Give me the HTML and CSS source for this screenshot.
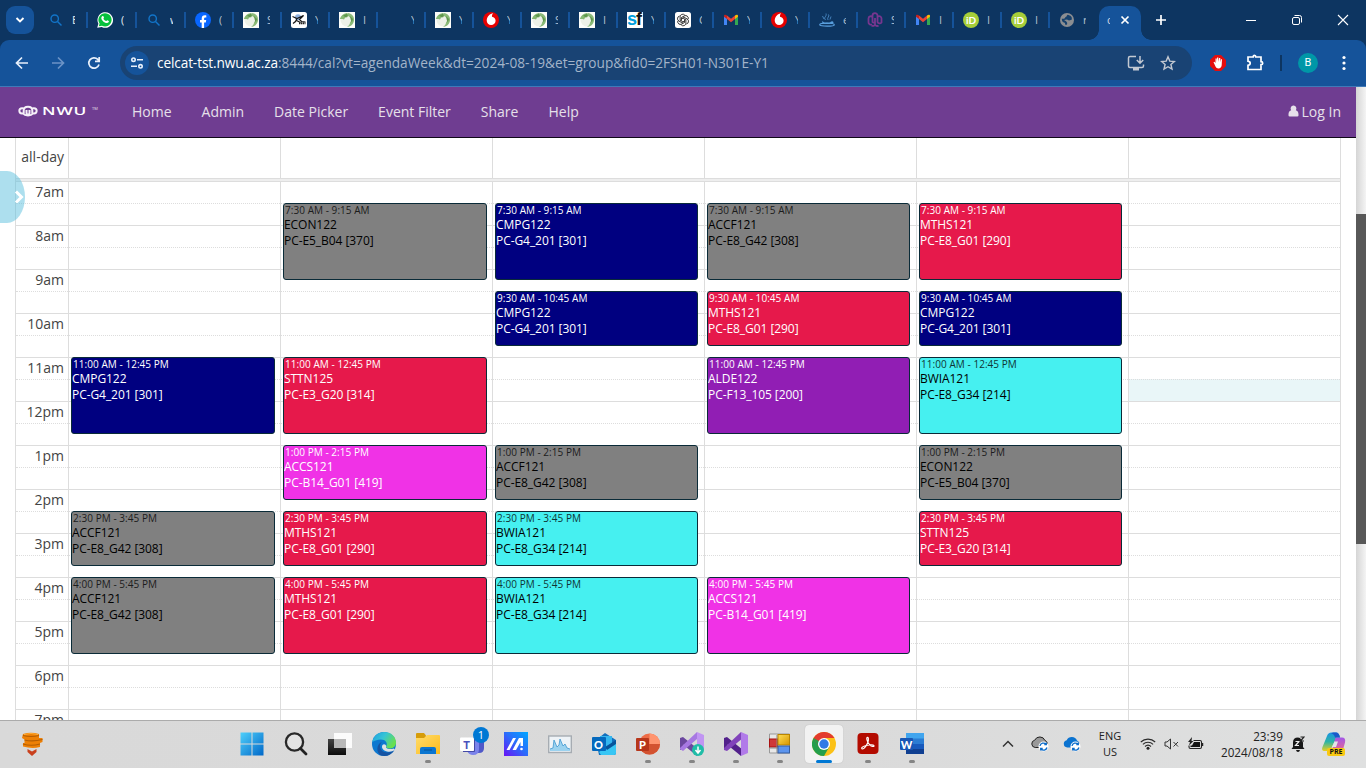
FILE: index.html
```html
<!DOCTYPE html>
<html lang="en">
<head>
<meta charset="utf-8">
<title>Timetable</title>
<link rel="stylesheet" href="styles.css">
</head>
<body>
<svg class="defs" width="0" height="0">
  <defs>
    <linearGradient id="gWin" x1="0" y1="0" x2="1" y2="1"><stop offset="0" stop-color="#4fd0fb"/><stop offset="1" stop-color="#0067c8"/></linearGradient>
    <linearGradient id="gEdge" x1="0" y1="0" x2="1" y2=".5"><stop offset="0" stop-color="#1d9de0"/><stop offset=".5" stop-color="#35c4d6"/><stop offset="1" stop-color="#69e04e"/></linearGradient>
    <linearGradient id="gM" x1="0" y1="1" x2="1" y2="0"><stop offset="0" stop-color="#6a12f5"/><stop offset=".5" stop-color="#2c6bfb"/><stop offset="1" stop-color="#00a8ff"/></linearGradient>
    <linearGradient id="gFold" x1="0" y1="0" x2="1" y2="1"><stop offset="0" stop-color="#ffdc6b"/><stop offset="1" stop-color="#fdbb1c"/></linearGradient>
    <linearGradient id="gDark" x1="0" y1="0" x2="0" y2="1"><stop offset="0" stop-color="#444"/><stop offset="1" stop-color="#0c0c0c"/></linearGradient>
    <linearGradient id="gGold" x1="0" y1="0" x2="1" y2="1"><stop offset="0" stop-color="#ffdf55"/><stop offset="1" stop-color="#d69400"/></linearGradient>
    <linearGradient id="gCo1" x1="0" y1="0" x2="0" y2="1"><stop offset="0" stop-color="#1992e4"/><stop offset=".5" stop-color="#2cb4a6"/><stop offset="1" stop-color="#e9cf20"/></linearGradient>
    <linearGradient id="gCo2" x1="0" y1="0" x2="0" y2="1"><stop offset="0" stop-color="#a257e8"/><stop offset="1" stop-color="#f46b7e"/></linearGradient>
    <symbol id="search" viewBox="0 0 16 16"><circle cx="6.700" cy="6.700" r="3.700" fill="none" stroke="#1275c9" stroke-width="1.400"/><path d="M9.500 9.500l4 4" stroke="#1275c9" stroke-width="1.500"/></symbol>
    <symbol id="whatsapp" viewBox="0 0 16 16"><path d="M.2 15.800l1.200-4A7.800 7.800 0 1 1 4.700 15z" fill="#fff"/><path d="M1.800 14.200l.8-2.600a6.600 6.600 0 1 1 2.400 2.100z" fill="#06c13c"/><path d="M5.200 4.200c1-.7 1.300 0 1.800 1.400.1.500-.7.900-.5 1.300.6 1.100 1.400 1.800 2.500 2.200.5.100.8-1 1.300-.8 1.700.8 1.900.8 1.400 1.800-.7 1.300-2.300 1.200-3.900.4C5.900 9.500 4.500 7.800 4.300 6.200c0-.9.300-1.500.9-2z" fill="#fff"/></symbol>
    <symbol id="facebook" viewBox="0 0 16 16"><circle cx="8" cy="8" r="8" fill="#0866ff"/><path d="M6.700 16v-5.500H5V8h1.700V6.700c0-2.400 1-3.500 3.300-3.500.5 0 1 .1 1.300.2v2.200c-1.500-.1-2.200 0-2.200 1.300V8h2.100l-.4 2.500H9.100V16z" fill="#fff"/></symbol>
    <symbol id="globe" viewBox="0 0 16 16"><path fill="#fcfdfa" d="M0 0h16v16H0z"/><circle cx="8" cy="8" r="6.500" fill="#edf1e8"/><path d="M.8 7C2 3.500 4 1.500 8 1l1.500 2.500L8 5.500l-1.500-.5L5 7.500 3.500 7z" fill="#86b873"/><path d="M8.500 1c4.500.4 7 3.500 6.500 7.500-.5 3.500-3 6-7 6.500 2-1.500 3-3 3-4.500L13 7.500 10.500 5 8.500 3.500z" fill="#8aba78"/><path d="M4 3.500l4-1.800.8 2.100-2 1.700zM11 4l3 3-1.200 3.500-1-2.500z" fill="#5f964c"/></symbol>
    <symbol id="xing" viewBox="0 0 16 16"><rect width="16" height="16" rx="2.500" fill="#fff"/><circle cx="7" cy="5.200" r="3" fill="#8fb1de"/><path d="M1.500 4.500l4.500 2L12.500 3.500 8.500 7.500l2 2 4 .5M6 6.500L4.500 9.500 2 11.500M5.500 8.500l4 2" fill="none" stroke="#161616" stroke-width="1.200"/><path d="M8 11.200h6.500" stroke="#222" stroke-width="2" stroke-dasharray="1.400 .5"/></symbol>
    <symbol id="vodafone" viewBox="0 0 16 16"><circle cx="8" cy="8" r="8" fill="#e60000"/><path d="M10.200 1.300C7.200 1.500 3.700 4.500 3.700 8.500c0 2.600 1.900 4.500 4.400 4.500s4.500-1.900 4.500-4.300c0-2.300-1.700-3.500-3.600-4-.2-1.400.3-2.500 1.200-3.400z" fill="#fff"/></symbol>
    <symbol id="gpt" viewBox="0 0 16 16"><rect width="16" height="16" rx="2.500" fill="#fff"/><g fill="none" stroke="#111" stroke-width=".8"><path id="petal" d="M7.800 9.800L5.100 8.200V4.800a2.700 2.700 0 0 1 4.700-1.700"/><use href="#petal" transform="rotate(60 8 8)"/><use href="#petal" transform="rotate(120 8 8)"/><use href="#petal" transform="rotate(180 8 8)"/><use href="#petal" transform="rotate(240 8 8)"/><use href="#petal" transform="rotate(300 8 8)"/></g></symbol>
    <symbol id="gmail" viewBox="0 0 16 16"><path d="M1 4v9h3V6z" fill="#4285f4"/><path d="M12 6v7h3V4z" fill="#34a853"/><path d="M12 3.600V7l3-2.200V4c0-1.600-1.700-1.800-3-.4z" fill="#fbbc04"/><path d="M4 3.600L8 6.800l4-3.200V7l-4 3.200L4 7z" fill="#ea4335"/><path d="M1 4.800L4 7V3.600C2.700 2.200 1 2.400 1 4z" fill="#c5221f"/></symbol>
    <symbol id="java" viewBox="0 0 16 16"><g fill="none" stroke="#5aa0df"><path d="M6.500 8C4 5 8 5 7 1.500M9 8C7.500 5.500 11 4.500 9.500 2.500M5 7L3.500 4M11 7.500l1-3" stroke-width=".7"/><path d="M3.500 9.500c0 2.500 9 2.500 9 0M12.500 10c2-.5 2 1-.5 1.500" stroke-width="1.200"/><ellipse cx="8" cy="12.700" rx="7.300" ry="1.500" stroke-width="1.200"/></g></symbol>
    <symbol id="nwu" viewBox="0 0 16 16"><path d="M1.500 10.500V6.500a2.300 2.300 0 0 1 4 -1.500V10a1.500 1.500 0 0 0 2.500 0M1.500 10a2.300 2.300 0 0 0 3.500 2.200M5.500 6V3.700a2.500 2.500 0 0 1 5 0V10a2.300 2.300 0 0 0 4 .5V6.500a2.300 2.300 0 0 0-3.500-2M8 6v6.500a2.200 2.200 0 0 0 3.500 1M8 12.500a2.200 2.200 0 0 1-3.300 1" fill="none" stroke="#77368f" stroke-width="1.800"/></symbol>
    <symbol id="earth" viewBox="0 0 16 16"><circle cx="8" cy="8" r="7" fill="#8a8d91"/><path d="M8.500 2.800c-1 1.300-.7 2-2 2.200-.5 1.500-1.500 2-3.700 1.800 0 2.500.8 3.500 2.800 4 .7.200.2 1.700 1.200 2.300C9 12.500 8.300 10.600 7 9.300L5 8l3-.6 2 1.200 2.700-.8C13.500 5 11.600 3.400 8.500 2.800z" fill="#15406c"/></symbol>
    <symbol id="cloud" viewBox="0 0 18 16"><path d="M4.200 11.500A3.700 3.700 0 0 1 3.700 4.200 5.600 5.600 0 0 1 14 4.500a3.500 3.500 0 0 1 1.500 5.500l-3 1.500z"/><circle cx="12.500" cy="10.500" r="5" fill="#fff" stroke="none"/><path d="M9 10a3.500 3.500 0 0 1 6-1.800M15.300 6.500v2h-2M16 11.500a3.500 3.500 0 0 1-6 1.500M9.700 14.500v-2h2" fill="none" stroke="#0a6bc9" stroke-width="1.300"/></symbol>
  </defs>
</svg>

<header class="tabstrip">
  <button class="tab-menu"><svg width="10" height="8" viewBox="0 0 10 8"><path d="M1.500 2L5 5.500 8.500 2" fill="none" stroke="#fff" stroke-width="1.900"/></svg></button>
  <div class="tabs">
    <div class="tab wide"><svg><use href="#search"/></svg><span>E</span></div>
    <div class="tab wide"><svg><use href="#whatsapp"/></svg><span>(</span></div>
    <div class="tab wide"><svg><use href="#search"/></svg><span>w</span></div>
    <div class="tab"><svg><use href="#facebook"/></svg><span>(</span></div>
    <div class="tab"><svg><use href="#globe"/></svg><span>S</span></div>
    <div class="tab"><svg><use href="#xing"/></svg><span>Y</span></div>
    <div class="tab"><svg><use href="#globe"/></svg><span>I</span></div>
    <div class="tab"><svg></svg><span>Y</span></div>
    <div class="tab"><svg><use href="#globe"/></svg><span>Y</span></div>
    <div class="tab"><svg><use href="#vodafone"/></svg><span>Y</span></div>
    <div class="tab"><svg><use href="#globe"/></svg><span>S</span></div>
    <div class="tab"><svg><use href="#globe"/></svg><span>I</span></div>
    <div class="tab"><div class="sf"><b>s</b><i>f</i></div><span>Y</span></div>
    <div class="tab"><svg><use href="#gpt"/></svg><span>C</span></div>
    <div class="tab"><svg><use href="#gmail"/></svg><span>Y</span></div>
    <div class="tab"><svg><use href="#vodafone"/></svg><span>Y</span></div>
    <div class="tab"><svg><use href="#java"/></svg><span>e</span></div>
    <div class="tab"><svg><use href="#nwu"/></svg><span>S</span></div>
    <div class="tab"><svg><use href="#gmail"/></svg><span>I</span></div>
    <div class="tab"><div class="orcid">iD</div><span>I</span></div>
    <div class="tab"><div class="orcid">iD</div><span>I</span></div>
    <div class="tab last"><svg><use href="#earth"/></svg><span>r</span></div>
    <div class="tab-active"><span>c</span><svg class="tab-x" viewBox="0 0 10 10"><path d="M1.500 1.500l7 7m0-7l-7 7" stroke="#fff" stroke-width="1.700"/></svg></div>
  </div>
  <svg class="tab-new" width="12" height="12" viewBox="0 0 12 12"><path d="M6 1v10M1 6h10" stroke="#fff" stroke-width="1.700"/></svg>
  <div class="window-controls">
    <svg width="12" height="12" viewBox="0 0 12 12"><path d="M1 6.500h10" stroke="#fff"/></svg>
    <svg width="12" height="12" viewBox="0 0 12 12"><g fill="none" stroke="#fff"><rect x="1.500" y="3.500" width="7" height="7" rx="1.500"/><path d="M3.500 1.500h5a2 2 0 0 1 2 2v5"/></g></svg>
    <svg width="12" height="12" viewBox="0 0 12 12"><path d="M1 1l10 10M11 1L1 11" stroke="#fff" stroke-width="1.100"/></svg>
  </div>
</header>

<div class="toolbar-back">
<div class="toolbar">
  <div class="nav-buttons">
    <svg width="16" height="16" viewBox="0 0 16 16"><path d="M14 8H3M8 2.500L2.500 8 8 13.500" fill="none" stroke="#e8f0fb" stroke-width="1.700"/></svg>
    <svg width="16" height="16" viewBox="0 0 16 16"><path d="M2 8h11M8 2.500L13.500 8 8 13.500" fill="none" stroke="#6c93c6" stroke-width="1.700"/></svg>
    <svg width="16" height="16" viewBox="0 0 16 16"><path d="M13 9.500A5.200 5.200 0 1 1 11.800 4.400L13 5.700M13.200 2v4.300H9" fill="none" stroke="#e8f0fb" stroke-width="1.700"/></svg>
  </div>
  <div class="omnibox">
    <div class="site-info"><svg width="14" height="14" viewBox="0 0 14 14"><g fill="none" stroke="#e8f0fb" stroke-width="1.600"><circle cx="3.500" cy="3.700" r="1.700"/><path d="M7 3.700h6M1 10.300h6"/><circle cx="10.500" cy="10.300" r="1.700"/></g></svg></div>
    <div class="url"><b>celcat-tst.nwu.ac.za</b>:8444/cal?vt=agendaWeek&amp;dt=2024-08-19&amp;et=group&amp;fid0=2FSH01-N301E-Y1</div>
    <svg width="18" height="16" viewBox="0 0 18 16"><path d="M9 1.500H3Q1.500 1.500 1.500 3v8q0 1.500 1.500 1.500h12q1.500 0 1.500-1.500V9.500M13 1v7M9.800 5L13 8.200 16.200 5" fill="none" stroke="#c3c9d2" stroke-width="1.500"/><path d="M6 13h6v2.500H6z" fill="#c3c9d2"/></svg>
    <svg class="star" width="16" height="16" viewBox="0 0 16 16"><path d="M8 1.800l1.800 4.300 4.600.4-3.500 3 1.100 4.600L8 11.700 4 14.100l1.100-4.600-3.500-3 4.600-.4z" fill="none" stroke="#c3c9d2" stroke-width="1.400"/></svg>
  </div>
  <svg class="adblock" width="16" height="16" viewBox="0 0 16 16"><path d="M5 0h6l5 5v6l-5 5H5l-5-5V5z" fill="#e40d0d"/><path d="M4.600 9.500L3.500 7.300l.9-.5L5.500 8V3.500h1.200V7l.4-4.500h1.200L8.500 7l.6-4h1.200l-.1 4.300.7-3H12l-.3 6c-.2 2-1.300 3.200-3.200 3.200-1.700 0-2.700-.8-3.900-4z" fill="#fff"/></svg>
  <svg class="puzzle" width="18" height="17" viewBox="0 0 18 17"><path d="M2 3h5.200q0-1.700 1.300-1.700T9.800 3H15v4.700q1.700 0 1.700 1.500T15 10.700V15.500H2v-4.200q2.200-.3 2.200-2T2 7.200z" fill="none" stroke="#fff" stroke-width="1.700"/></svg>
  <div class="divider"></div>
  <div class="avatar">B</div>
  <svg class="dots" width="4" height="16" viewBox="0 0 4 16" fill="#fff"><circle cx="2" cy="2.500" r="1.600"/><circle cx="2" cy="8" r="1.600"/><circle cx="2" cy="13.500" r="1.600"/></svg>
</div>
</div>

<div class="viewport">
<main class="page">
  <nav class="navbar">
    <div class="brand">
      <svg width="20" height="12" viewBox="0 0 20 12"><path d="M5.500 3.200H4a2.600 2.600 0 0 0 0 5.300h1.700V5.500Q5.700 1.800 10 1.800t4.300 3.700v3H16a2.600 2.600 0 0 0 0-5.300h-1.500M8.500 5v3q0 1.500 1.500 1.500t1.500-1.500V5M5 8.500Q6.500 10.500 10 10.500t5-2" fill="none" stroke="#f5f0f8" stroke-width="2"/></svg>
      <span class="brand-name">NWU</span><span class="tm">TM</span>
    </div>
    <a>Home</a><a>Admin</a><a>Date Picker</a><a>Event Filter</a><a>Share</a><a>Help</a>
    <a class="login"><svg width="11" height="12" viewBox="0 0 12 12"><path d="M6 0a3 3.300 0 0 1 2.600 5.200C11 6 11.500 8 11.500 10.500q0 1.500-1.500 1.500H2Q.5 12 .5 10.500C.5 8 1 6 3.400 5.200A3 3.300 0 0 1 6 0z" fill="#e6e0ea"/></svg>Log In</a>
  </nav>
  <section class="calendar">
    <div class="allday"><span>all-day</span><i></i><i></i><i></i><i></i><i></i><i></i></div>
    <div class="split"></div>
    <div class="timegrid">
      <div class="slots">
        <div>7am</div><div></div><div>8am</div><div></div><div>9am</div><div></div><div>10am</div><div></div><div>11am</div><div></div><div>12pm</div><div></div><div>1pm</div><div></div><div>2pm</div><div></div><div>3pm</div><div></div><div>4pm</div><div></div><div>5pm</div><div></div><div>6pm</div><div></div><div>7pm</div>
      </div>
      <div class="days">
        <div class="day">
          <article class="event navy r17 long"><small>11:00 AM - 12:45 PM</small>CMPG122<br>PC-G4_201 [301]</article>
          <article class="event gray r31"><small>2:30 PM - 3:45 PM</small>ACCF121<br>PC-E8_G42 [308]</article>
          <article class="event gray r37 long"><small>4:00 PM - 5:45 PM</small>ACCF121<br>PC-E8_G42 [308]</article>
        </div>
        <div class="day">
          <article class="event gray r3 long"><small>7:30 AM - 9:15 AM</small>ECON122<br>PC-E5_B04 [370]</article>
          <article class="event red r17 long"><small>11:00 AM - 12:45 PM</small>STTN125<br>PC-E3_G20 [314]</article>
          <article class="event pink r25"><small>1:00 PM - 2:15 PM</small>ACCS121<br>PC-B14_G01 [419]</article>
          <article class="event red r31"><small>2:30 PM - 3:45 PM</small>MTHS121<br>PC-E8_G01 [290]</article>
          <article class="event red r37 long"><small>4:00 PM - 5:45 PM</small>MTHS121<br>PC-E8_G01 [290]</article>
        </div>
        <div class="day narrow">
          <article class="event navy r3 long"><small>7:30 AM - 9:15 AM</small>CMPG122<br>PC-G4_201 [301]</article>
          <article class="event navy r11"><small>9:30 AM - 10:45 AM</small>CMPG122<br>PC-G4_201 [301]</article>
          <article class="event gray r25"><small>1:00 PM - 2:15 PM</small>ACCF121<br>PC-E8_G42 [308]</article>
          <article class="event cyan r31"><small>2:30 PM - 3:45 PM</small>BWIA121<br>PC-E8_G34 [214]</article>
          <article class="event cyan r37 long"><small>4:00 PM - 5:45 PM</small>BWIA121<br>PC-E8_G34 [214]</article>
        </div>
        <div class="day narrow">
          <article class="event gray r3 long"><small>7:30 AM - 9:15 AM</small>ACCF121<br>PC-E8_G42 [308]</article>
          <article class="event red r11"><small>9:30 AM - 10:45 AM</small>MTHS121<br>PC-E8_G01 [290]</article>
          <article class="event purple r17 long"><small>11:00 AM - 12:45 PM</small>ALDE122<br>PC-F13_105 [200]</article>
          <article class="event pink r37 long"><small>4:00 PM - 5:45 PM</small>ACCS121<br>PC-B14_G01 [419]</article>
        </div>
        <div class="day narrow">
          <article class="event red r3 long"><small>7:30 AM - 9:15 AM</small>MTHS121<br>PC-E8_G01 [290]</article>
          <article class="event navy r11"><small>9:30 AM - 10:45 AM</small>CMPG122<br>PC-G4_201 [301]</article>
          <article class="event cyan r17 long"><small>11:00 AM - 12:45 PM</small>BWIA121<br>PC-E8_G34 [214]</article>
          <article class="event gray r25"><small>1:00 PM - 2:15 PM</small>ECON122<br>PC-E5_B04 [370]</article>
          <article class="event red r31"><small>2:30 PM - 3:45 PM</small>STTN125<br>PC-E3_G20 [314]</article>
        </div>
        <div class="day"><div class="hover-slot"></div></div>
      </div>
    </div>
  </section>
  <div class="drawer-handle"><svg width="10" height="14" viewBox="0 0 10 14"><path d="M2 1.500L7.500 7 2 12.500" fill="none" stroke="#fff" stroke-width="3"/></svg></div>
</main>
<div class="scrollbar"><div class="thumb"></div></div>
</div>

<footer class="taskbar">
  <svg class="widget" width="24" height="24" viewBox="0 0 24 24"><path d="M3 2q8-2.500 16 0v4h3.500v4l-2.500 1v4q-8 2-17-.5V11h1.500V7.500L2 6z" fill="#ed8006"/><path d="M3 3.500q8 2 16 0M4.500 8q8 2 18-.5M3 12q8 2.500 17 0" fill="none" stroke="#b45d03" stroke-width="1.200"/><path d="M4 2.500q7-2 14 0" stroke="#ffad37" fill="none"/><path d="M7.500 17l4.500 2.500 4.500-2.500v3l-4.500 4-4.500-4z" fill="#c9401d"/></svg>
  <div class="apps">
    <div class="app"><svg viewBox="0 0 24 24"><path d="M.5.500h11v11H.5zM12.500.500h11v11h-11zM.5 12.500h11v11H.5zM12.500 12.500h11v11h-11z" fill="url(#gWin)"/></svg></div>
    <div class="app"><svg viewBox="0 0 24 24"><circle cx="10.500" cy="10" r="8.600" fill="#e3e3e3" stroke="#282828" stroke-width="2.300"/><path d="M16.500 16.500l5.500 5.500" stroke="#222" stroke-width="2.800" stroke-linecap="round"/></svg></div>
    <div class="app"><svg viewBox="0 0 24 24"><path d="M0 7h18v16H0z" fill="url(#gDark)"/><path d="M6 1h18v15H6z" fill="#fbfbfb"/><path d="M6 7h12v9H6z" fill="#b8b8b8"/></svg></div>
    <div class="app"><svg viewBox="0 0 24 24"><circle cx="12" cy="12" r="12" fill="#0d78d0"/><path d="M.3 10C1.500 3.500 6.500 0 12 0c7.500 0 12 5 12 10.500 0 4-3 6-6.500 6-2.500 0-4-1-3.200-2.200C16 11 13.500 7.500 9 7.500 5 7.500 1.500 9 .3 10z" fill="url(#gEdge)"/><path d="M8 14c0 6 7 8.500 14 4.500C19.500 23 14 25 9 23.500 4 21 4 12 10 10c-1.500 1.500-2 2.500-2 4z" fill="#1654a3"/><path d="M14.300 14.300C13 16 16 18 22 16.500l1 1.500q-4 2.500-8 1.500c-4-1-6-4-4.500-6.500 1-1.500 3.500-1 3.800 1.300z" fill="#e0e2e4"/></svg></div>
    <div class="app run"><svg viewBox="0 0 24 24"><path d="M0 2q0-1 1-1h7l2 2.500V8H0z" fill="#d69c09"/><path d="M0 6h8l3-3h12q1 0 1 1v18H0z" fill="url(#gFold)"/><path d="M4 22v-5q0-2 2-2h12q2 0 2 2v5z" fill="#0b76d1"/><path d="M8 18h8" stroke="#075395"/></svg></div>
    <div class="app"><svg viewBox="0 0 24 24"><circle cx="18" cy="4" r="4" fill="#5059c9"/><path d="M14 8h10v8q0 5-5 5h-4z" fill="#5059c9"/><path d="M8 7h11v10q0 6-6 6-4 0-6-4z" fill="#7b83eb"/><path d="M14.500 7v12.500H3" fill="none" stroke="#454aa5"/><rect x="0" y="5.500" width="14" height="13.500" rx="1" fill="#fff"/></svg><b class="letter teams">T</b><span class="badge">1</span></div>
    <div class="app"><svg viewBox="0 0 24 24"><path d="M0 0h24v24H0z" fill="url(#gM)"/><path d="M2.500 18L9 6h3L5.500 18zM8.500 18L15 6h4v8h-2.500V10L12 18z" fill="#fff"/><circle cx="17.500" cy="17" r="1.300" fill="#fff"/></svg></div>
    <div class="app"><svg viewBox="0 0 24 24"><rect x=".7" y="4" width="22.600" height="16.500" fill="#eef3f7" stroke="#a6acb2" stroke-width="1.400"/><path d="M2 17l3-1 1-8 3 7 2-2 1-6 3 7 2-2 2 4 3 1v2H2z" fill="#9bd2ef"/><path d="M2 17l3-1 1-8 3 7 2-2 1-6 3 7 2-2 2 4 3 1" fill="none" stroke="#3f97cf" stroke-width=".8"/></svg></div>
    <div class="app"><svg viewBox="0 0 24 24"><path d="M4 8l9-7 11 7v13q0 2-2 2H7z" fill="#126fbd"/><path d="M8 4h12v12H8z" fill="#35b6ef"/><path d="M7 20l17-11v12q0 2-2 2H9z" fill="#38c6f4"/><path d="M13 15l11-7v4l-9 6z" fill="#07549b"/><rect y="5" width="14" height="14" rx="1" fill="#0569bd"/></svg><b class="letter">O</b></div>
    <div class="app run"><svg viewBox="0 0 24 24"><circle cx="13.500" cy="12" r="10.500" fill="#ed6c47"/><path d="M13.500 1.500A10.500 10.500 0 0 1 24 12H13.500z" fill="#ff946f"/><path d="M3 12h21a10.500 10.500 0 0 1-21 0z" fill="#d35230"/><rect y="6" width="13" height="13" rx="1" fill="#b7361b"/></svg><b class="letter">P</b></div>
    <div class="app run"><svg viewBox="0 0 24 24"><path d="M0 6l3-1 15 12-1 7L3 12.500v4L0 18z" fill="#6b479e"/><path d="M0 16l17-16v7L3 19l-3-2z" fill="#a778e2"/><path d="M17 0l7 3v15l-7 6z" fill="#c195f2"/><circle cx="18" cy="18" r="6" fill="#20bda7"/><path d="M18 14.500v6M15.500 18l2.500 3 2.500-3" fill="none" stroke="#fff" stroke-width="1.500"/></svg></div>
    <div class="app run"><svg viewBox="0 0 24 24"><path d="M0 6l3-1 16 13-2 6L3 12.500v4L0 18z" fill="#52218b"/><path d="M0 18l3 1L19 6l-2-6L0 16z" fill="#8143bb"/><path d="M17 0l7 3v18l-7 3z" fill="#b17be9"/></svg></div>
    <div class="app run"><svg viewBox="0 0 24 24"><path d="M1.500 2h20v19h-20z" fill="#e8e8e8" stroke="#999"/><rect x="1.500" y="7" width="8" height="8" fill="#cf3939" stroke="#a11"/><path d="M9 3v18M2 16h8" stroke="#888"/><rect x="10" y="2.500" width="11.500" height="10.500" fill="url(#gGold)" stroke="#b98500"/><rect x="10" y="14" width="11.500" height="7" fill="#5b94ee" stroke="#345d9f"/></svg></div>
    <div class="app run current"><svg viewBox="0 0 24 24"><circle cx="12" cy="12" r="12" fill="#fbc117"/><path d="M1.600 6A12 12 0 0 0 12 24l5.200-9-5.200-3z" fill="#249f4b"/><path d="M1.600 6A12 12 0 0 1 22.400 6H12L6.800 15z" fill="#e33b2e"/><path d="M1.600 6l5.200 9 5.200-3z" fill="#249f4b"/><circle cx="12" cy="12" r="6" fill="#fff"/><circle cx="12" cy="12" r="4.700" fill="#327ae6"/></svg></div>
    <div class="app run"><svg viewBox="0 0 24 24"><rect x="1.500" y="1" width="21" height="21" rx="4" fill="#b30b00"/><path d="M11 5.500c1.500-1 1.800 2 .8 5-1 3-3.800 6.500-5.300 6.500-1.800-.5-.5-2.500 3.500-3.500 4-.8 7.500-1 8 .2.400 1.400-2.500 1-4.500-1.200-2-2-3.300-6-2.500-7z" fill="none" stroke="#fff" stroke-width="1.200"/></svg></div>
    <div class="app run"><svg viewBox="0 0 24 24"><path d="M6 1h18v6H6z" fill="#41a5ee"/><path d="M6 6.500h18V12H6z" fill="#2b7cd3"/><path d="M6 12h18v5H6z" fill="#185abd"/><path d="M6 17h18v5H6z" fill="#103f91"/><rect y="6" width="13" height="12" rx="1" fill="#1857b5"/></svg><b class="letter">W</b></div>
  </div>
  <div class="tray">
    <svg width="12" height="8" viewBox="0 0 12 8"><path d="M1 6.500L6 1.500l5 5" fill="none" stroke="#333" stroke-width="1.500"/></svg>
    <svg class="cloud-gray" width="18" height="16"><use href="#cloud"/></svg>
    <svg class="cloud-blue" width="18" height="16"><use href="#cloud"/></svg>
    <div class="lang">ENG<br>US</div>
    <svg class="wifi" width="16" height="14" viewBox="0 0 16 14"><g fill="none" stroke="#2b2b2b" stroke-width="1.100"><path d="M.8 5a10.500 10.500 0 0 1 14.400 0M2.900 7.300a7.400 7.400 0 0 1 10.200 0M5 9.500a4.400 4.400 0 0 1 6 0"/></g><circle cx="8" cy="11.300" r="1.500" fill="#222"/></svg>
    <svg class="mute" width="16" height="12" viewBox="0 0 16 12"><path d="M1 4h2L6.500 1v10L3 8H1zM9.500 4l4.500 4.500m0-4.500L9.500 8.500" fill="none" stroke="#333"/></svg>
    <svg class="battery" width="17" height="14" viewBox="0 0 17 14"><path d="M6.500 3.500H13q1.500 0 1.500 1.500v5q0 1.500-1.500 1.500H3.500Q2 11.500 2 10V8.500" fill="none" stroke="#222" stroke-width="1.100"/><path d="M7 5h6v5H3.500V8.500H5z" fill="#141414"/><path d="M15.500 6v3" stroke="#222" stroke-width="1.500"/><path d="M5 0L1 5h2L2 8.500 6.500 4h-2z" fill="#222"/></svg>
    <div class="clock">23:39<br>2024/08/18</div>
    <svg class="bell" width="14" height="16" viewBox="0 0 14 16"><path d="M2 11V6.500Q2 1.500 7 1.500l2 .5 3 4.500V11l1.500 2H.5zM5 14h4q-.5 2-2 2t-2-2z" fill="#171717"/><path d="M4.500 5.500h3.500l-3.500 4H8" fill="none" stroke="#eee" stroke-width="1.200"/><path d="M9.500 1H13L9.500 5H13" fill="none" stroke="#222" stroke-width="1.200"/></svg>
    <div class="copilot"><svg width="24" height="24" viewBox="0 0 24 24"><path d="M5 4q1-3.500 4.500-3.500H14q3 0 4 5h-3.500L9 17q-1 2-3 2H3q-4 0-2.500-4z" fill="url(#gCo1)"/><path d="M13.500 5.500H20q4 0 3 5l-2 7q-1 4-4 4h-5q-3 0-4-4l3-2z" fill="url(#gCo2)"/><path d="M11 .5h3q3 0 4 5h-5q-1-4-4-4z" fill="#1859c9"/><path d="M12.500 9.500h3.500l-2 5.500h-4z" fill="#e3e5e6"/></svg><span>PRE</span></div>
  </div>
</footer>
</body>
</html>
```
FILE: styles.css
```css
* { box-sizing: border-box; }
body { margin: 0; width: 1366px; height: 768px; overflow: hidden; display: flex; flex-direction: column; background: #fff; font-family: "Open Sans", "Noto Sans", sans-serif; }
svg { display: block; flex: none; }
.defs { position: absolute; }

/* browser tabs */
.tabstrip { height: 40px; flex: none; display: flex; align-items: center; background: #0d3561; }
.tab-menu { width: 28px; height: 28px; margin: 0 5px 0 6px; padding: 0; border: 0; border-radius: 9px; background: #15539a; display: grid; place-items: center; }
.tabs { display: flex; height: 40px; align-items: center; }
.tab { width: 48px; height: 16px; padding-left: 9px; display: flex; gap: 8px; border-right: 2px solid #15539a; }
.tab.wide { width: 49px; }
.tab.last { border: 0; }
.tab svg { width: 16px; height: 16px; }
.tab span { width: 3px; overflow: hidden; font-size: 11px; line-height: 16px; color: #b4c1d0; }
.tab.wide span { color: #e4e9ef; }
.sf { width: 16px; height: 16px; overflow: hidden; background: #fff; font: bold 18px/14px "Liberation Sans", sans-serif; letter-spacing: -1px; color: #009ddc; white-space: nowrap; }
.sf i { font-style: normal; color: #111; }
.orcid { width: 16px; height: 16px; border-radius: 50%; background: #a6ce39; color: #fff; font: bold 10px/16px Lato, sans-serif; text-align: center; }
.tab-active { position: relative; width: 42px; height: 34px; margin: 6px 0 0 1px; padding: 0 0 6px 8px; border-radius: 10px 10px 0 0; background: #15539a; display: flex; align-items: center; }
.tab-active::before, .tab-active::after { content: ""; position: absolute; bottom: 0; width: 10px; height: 10px; }
.tab-active::before { left: -10px; background: radial-gradient(circle at 0 0, transparent 9.5px, #15539a 10px); }
.tab-active::after { right: -10px; background: radial-gradient(circle at 100% 0, transparent 9.5px, #15539a 10px); }
.tab-active span { width: 3px; overflow: hidden; font-size: 11px; line-height: 16px; color: #cfd7e1; }
.tab-x { width: 10px; height: 10px; margin-left: 10px; }
.tab-new { margin-left: 14px; }
.window-controls { margin-left: auto; display: flex; gap: 34px; padding-right: 17px; }

/* browser toolbar */
.toolbar-back { height: 47px; flex: none; background: #0d3561; }
.toolbar { height: 47px; display: flex; align-items: center; background: #15539a; border-bottom: 1px solid #3f79b8; border-radius: 9px 9px 0 0; }
.nav-buttons { display: flex; gap: 20px; margin-left: 14px; width: 106px; }
.omnibox { width: 1072px; height: 34px; border-radius: 17px; background: #194374; display: flex; align-items: center; padding-left: 5px; }
.site-info { width: 24px; height: 24px; border-radius: 50%; background: #15539a; display: grid; place-items: center; margin-right: 8px; }
.url { width: 970px; font-size: 13.67px; line-height: 20px; white-space: nowrap; color: #a3b4c9; }
.url b { font-weight: 400; color: #fff; letter-spacing: -.13px; }
.star { margin-left: 15px; }
.adblock { margin-left: 18px; }
.puzzle { margin: -2px 0 0 20px; }
.divider { width: 2px; height: 16px; background: #0d3561; margin-left: 16px; }
.avatar { width: 20px; height: 20px; margin-left: 16px; border-radius: 50%; background: #0097a7; color: #fff; font: 11px/20px Roboto, sans-serif; text-align: center; }
.dots { margin-left: 24px; }

/* page */
.viewport { height: 633px; flex: none; display: flex; }
.page { position: relative; width: 1356px; overflow: hidden; }
.navbar { height: 51px; display: flex; align-items: center; gap: 30px; padding: 0 15px 2px 18px; background: #6f3d91; border-bottom: 1px solid #100818; color: #e6e0ea; font-size: 14px; }
.brand { width: 84px; display: flex; align-items: center; }
.brand-name { font-size: 11.5px; font-weight: 600; line-height: 12px; letter-spacing: .6px; color: #fff; margin-left: 4px; transform: scaleX(1.5); transform-origin: left; width: 50px; }
.tm { width: 8px; font-size: 4px; line-height: 6px; margin-bottom: 4px; }
.login { margin-left: auto; display: flex; align-items: center; gap: 3px; }
.calendar { width: 1326px; margin-left: 15px; border: solid #ddd; border-width: 0 1px; color: #444; font-size: 14px; }
.allday { height: 40px; display: grid; grid-template-columns: 52px repeat(6, 212px); }
.allday span { padding-right: 4px; text-align: right; line-height: 38px; }
.allday i { border-left: 1px solid #ddd; }
.split { height: 3px; border-top: 1px solid #ddd; background: #eee; }
.timegrid { display: grid; height: 539px; overflow: hidden; }
.slots, .days { grid-area: 1 / 1; }
.slots div { width: 1324px; height: 22px; border-top: 1px solid #ddd; padding-right: 1276px; line-height: 20px; white-space: nowrap; display: flex; justify-content: flex-end; }
.slots div:nth-child(even) { border-top-style: dotted; }
.days { display: grid; grid-template-columns: repeat(6, 212px); margin-left: 52px; height: 540px; }
.day { border-left: 1px solid #ddd; padding: 0 5px 0 2px; display: grid; grid-template-rows: repeat(49, 11px); }
.day.narrow { padding-right: 6px; }
.event { grid-row-end: span 5; border: 1px solid #0a2b38; border-radius: 3px; font-size: 12px; letter-spacing: -.06px; line-height: 16px; color: #fff; overflow: hidden; white-space: nowrap; }
.event.long { grid-row-end: span 7; }
.event small { display: block; font-size: 10px; letter-spacing: .05px; line-height: 12px; height: 13px; padding-left: 1px; }
.r3 { grid-row-start: 3; } .r11 { grid-row-start: 11; } .r17 { grid-row-start: 17; }
.r25 { grid-row-start: 25; } .r31 { grid-row-start: 31; } .r37 { grid-row-start: 37; }
.navy { background: #000080; } .red { background: #e6194b; } .purple { background: #911eb4; } .pink { background: #f032e6; }
.gray { background: #808080; color: #000; } .cyan { background: #46f0f0; color: #000; }
.gray small { color: #1c1c1c; } .cyan small { color: #0f3535; }
.hover-slot { grid-row: 19 / span 2; margin: 0 -5px 0 -2px; background: #e9f6f8; border-top: 1px dotted #ddd; }
.drawer-handle { position: absolute; left: 0; top: 84px; width: 25px; height: 52px; border-radius: 0 18px 18px 0 / 0 26px 26px 0; background: rgba(91, 192, 222, .5); display: flex; align-items: center; justify-content: flex-end; padding-right: 1px; }
.scrollbar { width: 10px; padding-top: 127px; background: linear-gradient(90deg, #d5d5d5, #f4f4f4); }
.thumb { height: 330px; background: #585858; }

/* taskbar */
.taskbar { height: 48px; flex: none; display: flex; align-items: center; padding-bottom: 1px; background: linear-gradient(90deg, #d9d9d9, #dadada 60%, #dfe0e0); border-top: 1px solid #ababab; }
.widget { margin-left: 20px; }
.apps { margin-left: 189px; display: flex; gap: 6px; }
.app { position: relative; width: 38px; height: 38px; border-radius: 4px; display: grid; place-items: center; }
.app svg { width: 24px; height: 24px; }
.app.current { background: #f2f2f2; box-shadow: 0 0 1px #aaa; }
.app.run::after { content: ""; position: absolute; left: 16px; bottom: 0; width: 6px; height: 3px; border-radius: 2px; background: #858585; }
.app.current::after { left: 11px; width: 16px; background: #0078d4; }
.letter { position: absolute; left: 7px; top: 13px; width: 13px; text-align: center; font: 900 11px/13px Lato, sans-serif; color: #fff; }
.letter.teams { color: #4b53bc; }
.badge { position: absolute; left: 20px; top: 2px; width: 16px; height: 16px; border-radius: 50%; background: #0078d4; color: #fff; font-size: 11px; line-height: 16px; text-align: center; }
.tray { margin-left: auto; display: flex; align-items: center; padding-right: 20px; color: #222; font-size: 11.700px; line-height: 16px; }
.cloud-gray { margin-left: 17px; fill: #999; stroke: #222; stroke-width: 1; }
.cloud-blue { margin-left: 14px; fill: #0b73d0; }
.lang { width: 40px; margin-left: 9px; text-align: center; font-size: 11px; }
.wifi { margin-left: 10px; }
.mute { margin-left: 8px; }
.battery { margin-left: 7px; }
.clock { width: 79px; text-align: right; }
.bell { margin-left: 8px; }
.copilot { position: relative; margin-left: 17px; width: 24px; height: 24px; }
.copilot span { position: absolute; left: 5px; bottom: 0; width: 18px; height: 8px; border-radius: 2px; background: #f9c912; color: #111; font: bold 7px/8px "Open Sans", sans-serif; text-align: center; }
```
